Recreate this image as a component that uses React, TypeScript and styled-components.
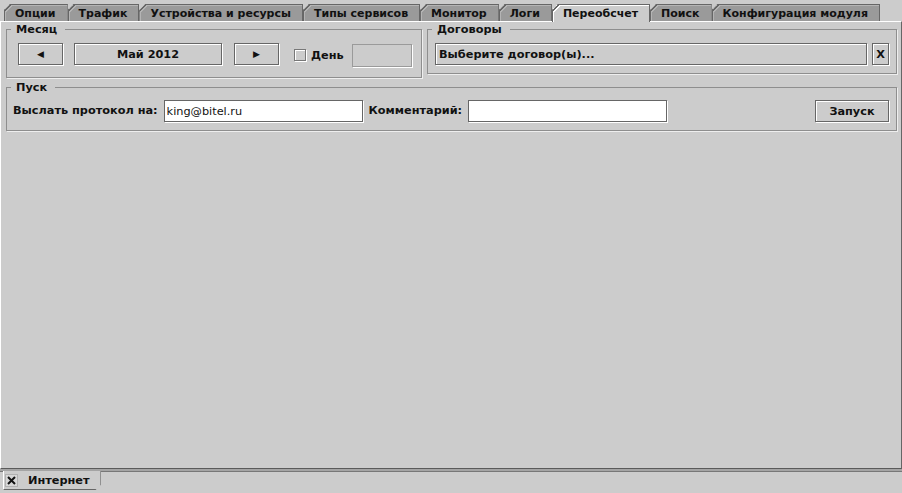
import React from 'react'
import styled, { createGlobalStyle } from 'styled-components'

const GlobalStyle = createGlobalStyle`
  html, body {
    margin: 0;
    padding: 0;
    background: #cccccc;
  }
  body {
    font-family: 'DejaVu Sans', sans-serif;
    font-size: 11.3px;
    color: #111;
  }
`

const Window = styled.div`
  width: 902px;
  height: 493px;
  display: flex;
  flex-direction: column;
  background: #cccccc;
  overflow: hidden;
`

const TabStrip = styled.div`
  height: 21px;
  flex: none;
  display: flex;
  align-items: flex-end;
  padding-left: 4px;
  position: relative;
`

const Tab = styled.div<{ $active?: boolean }>`
  position: relative;
  z-index: ${(p) => (p.$active ? 2 : 1)};
  box-sizing: border-box;
  height: ${(p) => (p.$active ? 18 : 17)}px;
  margin-bottom: ${(p) => (p.$active ? -1 : 0)}px;
  padding: 0 11px 0 10px;
  display: flex;
  align-items: center;
  font: bold 11px 'DejaVu Sans', sans-serif;
  color: #111;
  white-space: nowrap;
  background: ${(p) => (p.$active ? '#cccccc' : '#9a9a9a')};
  border: 1px solid #666;
  border-bottom: none;
  box-shadow: inset 1px 1px 0 ${(p) => (p.$active ? '#ffffff' : '#b4b4b4')};
  clip-path: polygon(6px 0, 100% 0, 100% 100%, 0 100%, 0 6px);

  &::before {
    content: '';
    position: absolute;
    top: -1px;
    left: -1px;
    width: 8px;
    height: 8px;
    background: linear-gradient(
      to bottom right,
      transparent 40%,
      #666 40%,
      #666 52%,
      ${(p) => (p.$active ? '#fff' : '#b4b4b4')} 52%,
      ${(p) => (p.$active ? '#fff' : '#b4b4b4')} 64%,
      transparent 64%
    );
  }
`

const Panel = styled.div`
  flex: 1;
  box-sizing: border-box;
  background: #cccccc;
  border-top: 1px solid #ffffff;
  border-left: 1px solid #ffffff;
  border-right: 1px solid #666;
  border-bottom: 1px solid #5a5a5a;
  padding: 1px 4px 0 5px;
  display: flex;
  flex-direction: column;
  align-items: stretch;
`

const TopRow = styled.div`
  display: flex;
  align-items: flex-start;
  gap: 5px;
`

const Group = styled.fieldset<{ $width?: number; $grow?: boolean; $top?: number }>`
  margin: ${(p) => p.$top ?? 0}px 0 0 0;
  padding: 0;
  min-width: 0;
  border: 1px solid #8e8e8e;
  box-shadow: 1px 1px 0 #eeeeee;
  ${(p) => (p.$width ? `width: ${p.$width}px;` : '')}
  flex: ${(p) => (p.$grow ? '1' : 'none')};
  box-sizing: border-box;
`

const Legend = styled.legend`
  margin-left: 4px;
  padding: 0 8px 0 5px;
  font: bold 11.3px 'DejaVu Sans', sans-serif;
  line-height: 13px;
  height: 13px;
  color: #111;
`

const GroupBody = styled.div<{ $pad: string; $gap?: number }>`
  display: flex;
  align-items: flex-start;
  gap: ${(p) => p.$gap ?? 0}px;
  padding: ${(p) => p.$pad};
`

const Button = styled.button<{ $width?: number; $align?: string }>`
  box-sizing: border-box;
  height: 22px;
  ${(p) => (p.$width ? `width: ${p.$width}px; flex: none;` : 'flex: 1;')}
  margin: 0;
  padding: 0 3px;
  background: #cccccc;
  border: 1px solid #666;
  box-shadow: 1px 1px 0 #ffffff, inset 1px 1px 0 #ffffff;
  font: bold 11.3px 'DejaVu Sans', sans-serif;
  color: #111;
  display: flex;
  align-items: center;
  justify-content: ${(p) => p.$align ?? 'center'};
  cursor: default;
`

const Arrow = styled.span`
  font-size: 9px;
  line-height: 1;
`

const Check = styled.span`
  box-sizing: border-box;
  width: 12px;
  height: 12px;
  flex: none;
  border: 1px solid #777;
  box-shadow: 1px 1px 0 #ffffff, inset 1px 1px 0 #ffffff;
  background: #cccccc;
`

const CheckLabel = styled.label`
  display: flex;
  align-items: center;
  gap: 5px;
  height: 24px;
  margin-left: 15px;
  font: bold 11.3px 'DejaVu Sans', sans-serif;
`

const Field = styled.input<{ $width: number; $disabled?: boolean }>`
  box-sizing: border-box;
  width: ${(p) => p.$width}px;
  height: ${(p) => (p.$disabled ? 23 : 22)}px;
  margin: ${(p) => (p.$disabled ? '1px 0 0 8px' : '0')};
  padding: 0 2px;
  flex: none;
  border: 1px solid ${(p) => (p.$disabled ? '#9a9a9a' : '#666')};
  box-shadow: 1px 1px 0 #ffffff;
  background: ${(p) => (p.$disabled ? '#cccccc' : '#ffffff')};
  font: 11.3px 'DejaVu Sans', sans-serif;
  color: #111;
  outline: none;
`

const Label = styled.span`
  font: bold 11.3px 'DejaVu Sans', sans-serif;
  white-space: nowrap;
  height: 22px;
  line-height: 22px;
`

const Spacer = styled.div`
  flex: 1;
`

const Divider = styled.div`
  height: 2px;
  flex: none;
  background: #a4a4a4;
`

const BottomBar = styled.div`
  height: 22px;
  flex: none;
  display: flex;
  align-items: flex-start;
`

const BarLine = styled.div<{ $width?: number }>`
  ${(p) => (p.$width ? `width: ${p.$width}px;` : 'flex: 1;')}
  border-top: 1px solid #777;
  height: 0;
`

const BottomTab = styled.div`
  box-sizing: border-box;
  height: 19px;
  display: flex;
  align-items: center;
  gap: 10px;
  padding: 0 10px 0 1px;
  background: #cccccc;
  border-left: 1px solid #ffffff;
  border-right: 1px solid #666;
  border-bottom: 1px solid #666;
  clip-path: polygon(0 0, 100% 0, 100% calc(100% - 5px), calc(100% - 5px) 100%, 0 100%);
  font: bold 11.3px 'DejaVu Sans', sans-serif;
`

const CloseBox = styled.span`
  box-sizing: border-box;
  width: 13px;
  height: 13px;
  display: flex;
  align-items: center;
  justify-content: center;
  background: #d6d6d6;
  border: 1px solid #b0b0b0;
`

const tabs = [
  'Опции',
  'Трафик',
  'Устройства и ресурсы',
  'Типы сервисов',
  'Монитор',
  'Логи',
  'Переобсчет',
  'Поиск',
  'Конфигурация модуля',
]

export default function App() {
  return (
    <Window>
      <GlobalStyle />
      <TabStrip>
        {tabs.map((t) => (
          <Tab key={t} $active={t === 'Переобсчет'}>
            {t}
          </Tab>
        ))}
      </TabStrip>
      <Panel>
        <TopRow>
          <Group $width={416}>
            <Legend>Месяц</Legend>
            <GroupBody $pad="7px 0 10px 11px">
              <Button $width={45}>
                <Arrow>◀</Arrow>
              </Button>
              <Button $width={148} style={{ marginLeft: 11 }}>
                Май 2012
              </Button>
              <Button $width={45} style={{ marginLeft: 12 }}>
                <Arrow>▶</Arrow>
              </Button>
              <CheckLabel>
                <Check />
                День
              </CheckLabel>
              <Field $width={60} $disabled readOnly />
            </GroupBody>
          </Group>
          <Group $grow>
            <Legend>Договоры</Legend>
            <GroupBody $pad="7px 7px 8px 7px">
              <Button $align="flex-start">Выберите договор(ы)...</Button>
              <Button $width={17} style={{ marginLeft: 5, padding: 0 }}>
                X
              </Button>
            </GroupBody>
          </Group>
        </TopRow>
        <Group $top={3}>
          <Legend>Пуск</Legend>
          <GroupBody $pad="6px 7px 8px 6px" $gap={6}>
            <Label>Выслать протокол на:</Label>
            <Field $width={199} defaultValue="king@bitel.ru" />
            <Label>Комментарий:</Label>
            <Field $width={199} />
            <Spacer />
            <Button $width={74}>Запуск</Button>
          </GroupBody>
        </Group>
      </Panel>
      <Divider />
      <BottomBar>
        <BarLine $width={3} />
        <BottomTab>
          <CloseBox>
            <svg width="9" height="9" viewBox="0 0 9 9">
              <path d="M1 1 L8 8 M8 1 L1 8" stroke="#111" strokeWidth="2" />
            </svg>
          </CloseBox>
          Интернет
        </BottomTab>
        <BarLine />
      </BottomBar>
    </Window>
  )
}
